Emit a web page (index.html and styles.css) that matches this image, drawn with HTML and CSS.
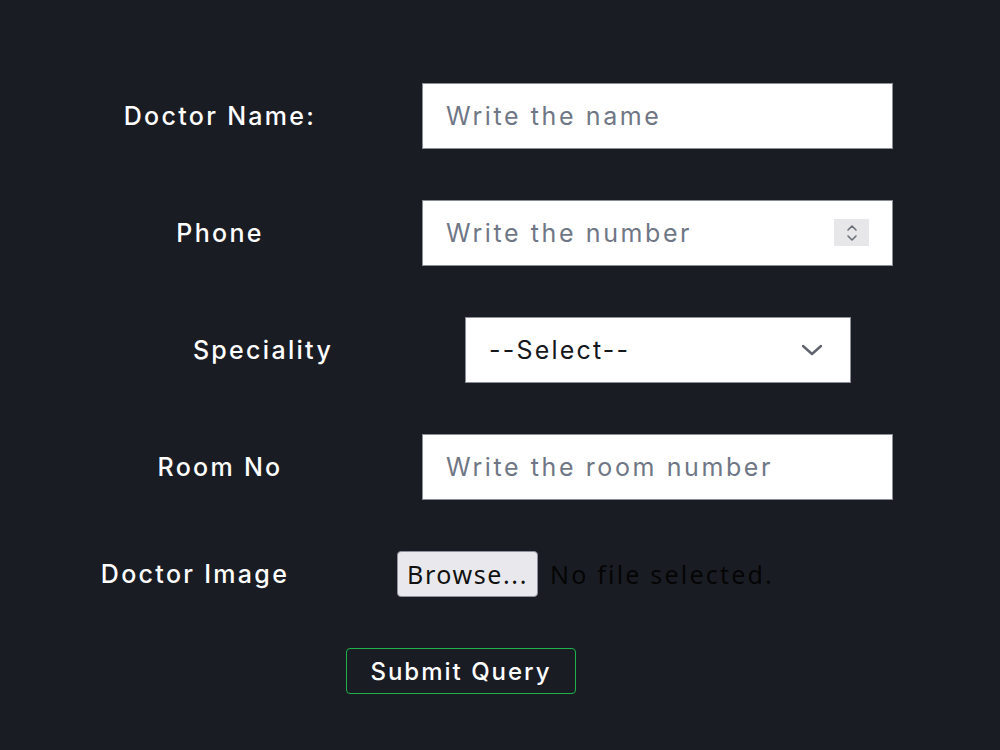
FILE: index.html
```html
<!DOCTYPE html>
<html lang="en">
<head>
    <meta charset="UTF-8">
    <meta name="viewport" content="width=device-width, initial-scale=1.0">
    <title>Add Doctor</title>
    <link rel="stylesheet" href="styles.css">
</head>
<body>
    <form class="doctor-form" onsubmit="return false;">
        <div class="row row-name">
            <label class="field-label" for="docName">Doctor Name:</label>
            <input class="text-input" type="text" id="docName" placeholder="Write the name">
        </div>

        <div class="row row-phone">
            <label class="field-label" for="phone">Phone</label>
            <div class="number-wrap">
                <input class="text-input" type="number" id="phone" placeholder="Write the number">
                <span class="spinner">
                    <svg width="12" height="20" viewBox="0 0 12 20" fill="none" stroke="#6b6f78" stroke-width="1.6" stroke-linecap="round" stroke-linejoin="round">
                        <polyline points="2,7 6,3 10,7"/>
                        <polyline points="2,13 6,17 10,13"/>
                    </svg>
                </span>
            </div>
        </div>

        <div class="row row-speciality">
            <label class="field-label" for="speciality">Speciality</label>
            <div class="select-wrap">
                <select id="speciality" class="select-input">
                    <option>--Select--</option>
                    <option>Cardiology</option>
                    <option>Neurology</option>
                    <option>Orthopedics</option>
                </select>
                <span class="chevron">
                    <svg width="22" height="12" viewBox="0 0 22 12" fill="none" stroke="#5f636b" stroke-width="2.4" stroke-linecap="round" stroke-linejoin="round">
                        <polyline points="2,2 11,10 20,2"/>
                    </svg>
                </span>
            </div>
        </div>

        <div class="row row-room">
            <label class="field-label" for="room">Room No</label>
            <input class="text-input" type="text" id="room" placeholder="Write the room number">
        </div>

        <div class="row row-image">
            <span class="field-label">Doctor Image</span>
            <label class="file-pick">
                <input type="file" class="file-hidden">
                <span class="browse-btn">Browse...</span>
                <span class="file-status">No file selected.</span>
            </label>
        </div>

        <div class="row row-submit">
            <button type="submit" class="submit-btn">Submit Query</button>
        </div>
    </form>
</body>
</html>
```

FILE: styles.css
```css
* {
    margin: 0;
    padding: 0;
    box-sizing: border-box;
}

body {
    font-family: Inter, "Noto Sans", sans-serif;
    background-color: #1a1c24;
    color: #fff;
    min-height: 100vh;
}

.doctor-form {
    display: flex;
    flex-direction: column;
    gap: 51px;
    padding-top: 83px;
}

.row {
    display: flex;
    align-items: center;
}

.field-label {
    font-size: 25px;
    font-weight: 500;
    color: #fff;
    text-align: center;
    letter-spacing: 2.3px;
}

.row-name .field-label,
.row-phone .field-label,
.row-room .field-label {
    width: 400px;
    margin-left: 20px;
    margin-right: 2px;
}

.row-speciality .field-label {
    width: 400px;
    margin-left: 63px;
    margin-right: 2px;
}

.text-input,
.select-input {
    width: 471px;
    height: 66px;
    border: 1px solid #8a8e97;
    background-color: #fff;
    font-family: Inter, "Noto Sans", sans-serif;
    font-size: 25px;
    letter-spacing: 2.6px;
    padding: 0 23px;
    color: #1a1c24;
    outline: none;
}

.text-input::placeholder {
    color: #6f7786;
}

.number-wrap,
.select-wrap {
    position: relative;
}

.number-wrap input {
    -moz-appearance: textfield;
}

.number-wrap input::-webkit-inner-spin-button,
.number-wrap input::-webkit-outer-spin-button {
    -webkit-appearance: none;
    margin: 0;
}

.spinner {
    position: absolute;
    right: 24px;
    top: 19px;
    width: 35px;
    height: 27px;
    background-color: #e7e7ea;
    display: flex;
    align-items: center;
    justify-content: center;
}

.select-input {
    width: 386px;
    height: 66px;
    appearance: none;
    -webkit-appearance: none;
    border-radius: 0;
    padding: 0 23px;
    letter-spacing: 2.2px;
    color: #15171c;
}

.chevron {
    position: absolute;
    right: 28px;
    top: 27px;
    display: flex;
    pointer-events: none;
}

.row-image .field-label {
    width: 390px;
    margin-right: 7px;
}

.file-pick {
    display: flex;
    align-items: center;
    cursor: pointer;
}

.file-hidden {
    display: none;
}

.browse-btn {
    font-family: "Noto Sans", sans-serif;
    font-size: 25px;
    letter-spacing: 1.6px;
    color: #111;
    background-color: #e9e9ed;
    border: 1px solid #8f8f9d;
    border-radius: 4px;
    height: 46px;
    width: 141px;
    display: flex;
    align-items: center;
    justify-content: center;
}

.file-status {
    font-family: "Noto Sans", sans-serif;
    font-size: 25px;
    letter-spacing: 2.2px;
    color: #050505;
    margin-left: 12px;
}

.row-submit {
    padding-left: 346px;
}

.submit-btn {
    width: 230px;
    height: 46px;
    background-color: transparent;
    color: #fff;
    border: 1.5px solid #1fb14a;
    border-radius: 4px;
    font-family: Inter, "Noto Sans", sans-serif;
    font-size: 24px;
    font-weight: 500;
    letter-spacing: 2px;
    cursor: pointer;
}
```
